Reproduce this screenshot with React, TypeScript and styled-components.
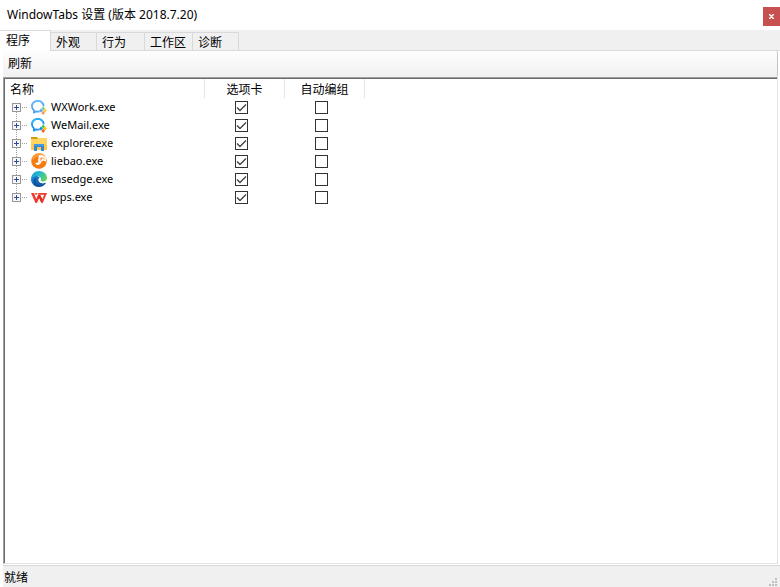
import React, { useState } from "react";
import styled, { createGlobalStyle } from "styled-components";

const GlobalStyle = createGlobalStyle`
  *, *::before, *::after { box-sizing: border-box; }
  body {
    margin: 0;
    background: #fff;
    color: #000;
    font: 12px/18px "Noto Sans", "Noto Sans CJK SC", sans-serif;
  }
  button, input { margin: 0; padding: 0; font: inherit; color: inherit; }
`;

const Window = styled.div`
  display: flex;
  flex-direction: column;
  min-height: 100vh;
`;

const TitleBar = styled.header`
  display: flex;
  justify-content: space-between;
  height: 30px;
  padding: 7px 0 4px 7px;
`;

const Title = styled.h1`
  margin: 0;
  font: 12px/16px "Noto Sans", "Noto Sans CJK SC", sans-serif;
`;

const CloseButton = styled.button`
  display: grid;
  place-items: center;
  width: 17px;
  height: 19px;
  border: 0;
  background: #c75050;
`;

const TabStrip = styled.div`
  display: flex;
  align-items: flex-end;
  height: 21px;
  background: #f0f0f0;
  box-shadow: inset 0 -1px #d9d9d9;
`;

const Tab = styled.button<{ $width: number; $active: boolean }>`
  width: ${(p) => p.$width}px;
  height: ${(p) => (p.$active ? 21 : 19)}px;
  padding: ${(p) => (p.$active ? "0 0 0 6px" : "2px 0 0 5px")};
  border: solid #d9d9d9;
  border-width: ${(p) => (p.$active ? "1px 1px 0 0" : "1px 1px 1px 0")};
  background: ${(p) => (p.$active ? "#fff" : "#f0f0f0")};
  text-align: left;
  line-height: 16px;
  white-space: nowrap;
`;

const Panel = styled.main`
  display: flex;
  flex: 1;
  flex-direction: column;
  padding: 0 2px 1px 3px;
`;

const Toolbar = styled.div`
  display: flex;
  height: 26px;
  border-right: 1px solid #c4c4c4;
  border-radius: 0 2px 2px 0;
  background: linear-gradient(#fdfdfd, #f0f0f0);
`;

const ToolButton = styled.button`
  height: 26px;
  padding: 0 5px;
  border: 0;
  background: transparent;
`;

const TreeFrame = styled.section`
  flex: 1;
  border: 1px solid;
  border-color: #a0a0a0 #e3e3e3 #e3e3e3 #a0a0a0;
  box-shadow: inset 1px 1px #696969;
  padding: 1px 0 0 1px;
`;

const TreeTable = styled.table`
  width: 360px;
  table-layout: fixed;
  border-collapse: separate;
  border-spacing: 0;
`;

const HeadCell = styled.th<{ $name?: boolean }>`
  width: ${(p) => (p.$name ? 200 : 80)}px;
  height: 19px;
  padding: ${(p) => (p.$name ? "3px 0 0 5px" : "3px 0 0")};
  border-right: 1px solid #e5e5e5;
  font-weight: 400;
  line-height: 16px;
  text-align: ${(p) => (p.$name ? "left" : "center")};
`;

const Cell = styled.td`
  height: 18px;
  padding: 0;
`;

const NameLine = styled.div`
  display: flex;
  align-items: center;
  height: 18px;
  padding-left: 7px;
  font-size: 11px;
`;

const Branch = styled.button`
  display: block;
  width: 19px;
  height: 18px;
  border: 0;
  background: transparent;

  svg { display: block; }
`;

const Program = styled.span`
  padding-left: 4px;
  line-height: 18px;
`;

const CheckHolder = styled.label`
  display: grid;
  width: 13px;
  height: 13px;
  margin-left: 30px;

  > * { grid-area: 1 / 1; }
  svg { pointer-events: none; display: none; }
  input:checked + svg { display: block; }
`;

const CheckInput = styled.input`
  appearance: none;
  width: 13px;
  height: 13px;
  border: 1px solid #333;
  background: #fff;
`;

const StatusBar = styled.footer`
  display: flex;
  justify-content: space-between;
  align-items: flex-end;
  height: 22px;
  margin-left: 3px;
  padding: 0 3px 1px 1px;
  border-top: 1px solid #d7d7d7;
  background: #f0f0f0;
`;

const StatusText = styled.span`
  line-height: 16px;
`;

const Icon = ({ children }: { children: React.ReactNode }) => (
  <svg width="16" height="16" viewBox="0 0 16 16" aria-hidden="true">{children}</svg>
);

const ChatIcon = ({ mail = false }: { mail?: boolean }) => (
  <Icon>
    <path
      d="M12.6 7.2C12.6 4 10.2 1.8 6.9 1.8S1 4.2 1 7.3c0 1.8.8 3.2 2.1 4.2L2.8 13.6l2.4-1.2c1.2.3 2.4.3 3.4 0"
      fill="none"
      stroke={mail ? "#1f95ee" : "#55a3f2"}
      strokeWidth="1.8"
      strokeLinejoin="round"
    />
    <path d="M1 7.3C1 4.2 3.5 1.8 6.9 1.8c2 0 3.7.8 4.7 2.2" fill="none" stroke={mail ? "#29b4f4" : "#6fb9f8"} strokeWidth="1.8" />
    <path d="M12.2 7.2l1.7 2.2-1.6 2.2-1.8-2.2z" fill={mail ? "#45c83f" : "#79cf82"} />
    <path d="M14.1 9.6l1.9 2-2 1.9-2-1.8z" fill={mail ? "#ffc400" : "#ffca45"} />
    <path d="M12.2 11.8l1.8 2-1.8 2.2-1.9-2z" fill={mail ? "#fa6428" : "#f89663"} />
    <path d="M10 9.6l1.9 2-1.9 2-1.9-1.8z" fill={mail ? "#1689e8" : "#55abf1"} />
  </Icon>
);

const FolderIcon = () => (
  <Icon>
    <path d="M0 2h6l1.5 2H0z" fill="#d79a12" />
    <path d="M0 4h7l1-1h8v12H0z" fill="#ffd461" />
    <path d="M0 9h16v6H0z" fill="#fbc94e" />
    <path d="M3 10q0-1 1-1h8q1 0 1 1v6h-3v-4H6v4H3z" fill="#3585d3" />
    <path d="M3 10q0-1 1-1h8q1 0 1 1v1H3z" fill="#459be2" />
  </Icon>
);

const LeopardIcon = () => (
  <Icon>
    <circle cx="8" cy="8" r="7.8" fill="#f67a12" />
    <path d="M1 5C3.5.7 10-.5 13.6 2.5 9 1.8 5 3.2 2.2 7z" fill="#ff9a3c" />
    <path d="M7.5 2.8C10 1 13.8 2 15.3 5.5l-.4 3.2-2.4-1.2-1.8.8c-.5 2-1.8 3.3-3.6 3.6-1.6 0-2.6-.8-2.8-2.2l1.5.3 1.8-1.1-.6-1.2C6.900 6.500 8 4.600 7.500 2.800z" fill="#fff" />
    <path d="M9.500 4.200l2.700.3 2.600 2.200-3.400-.8-2.300 2.400-.3-1.700z" fill="#ffb36e" />
  </Icon>
);

const EdgeIcon = () => (
  <Icon>
    <defs>
      <linearGradient id="edge-wave" x1="0" y1="0" x2="1" y2="0.5">
        <stop offset="0" stopColor="#1a92dc" />
        <stop offset="0.55" stopColor="#27bcc8" />
        <stop offset="1" stopColor="#5fd45a" />
      </linearGradient>
      <linearGradient id="edge-base" x1="0" y1="0" x2="0.6" y2="1">
        <stop offset="0" stopColor="#1b8fdc" />
        <stop offset="1" stopColor="#0f529d" />
      </linearGradient>
    </defs>
    <path d="M0 8c0 4.6 3.5 8 8 8 2.9 0 5.4-1.4 6.8-3.7.4-.6-.2-1-.8-.7-3 1.3-6.4.2-6.4-2.8 0-1 .6-1.7 1.3-2.200C6.200 3.900 1 4.300 0 8z" fill="url(#edge-base)" />
    <path d="M0 8C.3 3.300 3.600 0 8 0c4.600 0 8 3.200 8 6.700 0 2.500-1.700 4-4 4-1.800 0-3-.6-2.500-1.400 1.300-2-.6-4.300-3.600-4.300C3.300 5 .8 6 0 8z" fill="url(#edge-wave)" />
    <path d="M5.800 7C3.300 10.200 5.400 15 10 15.500 6.500 16.700 2.500 13.700 2.600 10.300 2.700 8.500 3.900 7.200 5.800 7z" fill="#104f98" />
    <path d="M8.900 6.600c1.100.7 1.300 1.800.6 2.700-.5.800.7 1.400 2.500 1.400 1.400 0 2.600-.6 3.300-1.600l.1 2.200-1.400.4c-3 1.300-6.400.1-6.400-2.900 0-1 .5-1.700 1.300-2.200z" fill="#fff" />
  </Icon>
);

const WpsIcon = () => (
  <Icon>
    <path d="M0 4h3l2.200 6L7 6h2.200l2 4.200L13.200 5.800H6.800L7.500 4H16l-4.300 10h-1.200L8.300 9l-2.400 5H4.500z" fill="#f2382c" />
    <path d="M3.600 4h3.100l-.8 1.800H4.200z" fill="#ff5a48" />
    <path d="M7 6h2.200l2.100 4.500L10.400 14 8.100 8.700z" fill="#db2922" />
  </Icon>
);

const CloseGlyph = () => (
  <svg width="7" height="7" viewBox="0 0 7 7" aria-hidden="true">
    <path d="M1.500 1.500l4 4M5.500 1.500l-4 4M1 1.500h1.500M4.500 1.500H6M1 5.500h1.500M4.500 5.500H6" stroke="#fff" strokeWidth="1.200" />
  </svg>
);

const BranchGlyph = ({ first, last }: { first: boolean; last: boolean }) => (
  <svg width="19" height="18" viewBox="0 0 19 18" aria-hidden="true" shapeRendering="crispEdges">
    {!first && <path d="M4.5 0v5" stroke="#a0a0a0" strokeDasharray="1 1" />}
    {!last && <path d="M4.5 14v4" stroke="#a0a0a0" strokeDasharray="1 1" />}
    <path d="M10 9.5h6" stroke="#a0a0a0" strokeDasharray="1 1" />
    <rect x="0.5" y="5.5" width="8" height="8" fill="#f7f7f7" stroke="#969696" />
    <path d="M2 9.5h5M4.5 7v5" stroke="#2b4b9b" />
  </svg>
);

const SizeGrip = () => (
  <svg width="8" height="8" viewBox="0 0 8 8" aria-hidden="true">
    <path d="M6 0h2v2H6zM3 3h2v2H3zM6 3h2v2H6zM0 6h2v2H0zM3 6h2v2H3zM6 6h2v2H6z" fill="#bfbfbf" />
  </svg>
);

const Check = ({ label, initial }: { label: string; initial: boolean }) => (
  <CheckHolder>
    <CheckInput type="checkbox" aria-label={label} defaultChecked={initial} />
    <svg width="13" height="13" viewBox="0 0 13 13" aria-hidden="true">
      <path d="M2 6.5l3 3 6-6" fill="none" stroke="#444" strokeWidth="1.4" />
    </svg>
  </CheckHolder>
);

const tabs = [
  { name: "程序", width: 51 },
  { name: "外观", width: 46 },
  { name: "行为", width: 48 },
  { name: "工作区", width: 48 },
  { name: "诊断", width: 46 },
];

const programs = [
  { name: "WXWork.exe", icon: <ChatIcon /> },
  { name: "WeMail.exe", icon: <ChatIcon mail /> },
  { name: "explorer.exe", icon: <FolderIcon /> },
  { name: "liebao.exe", icon: <LeopardIcon /> },
  { name: "msedge.exe", icon: <EdgeIcon /> },
  { name: "wps.exe", icon: <WpsIcon /> },
];

export default function App() {
  const [active, setActive] = useState("程序");
  return (
    <Window>
      <GlobalStyle />
      <TitleBar>
        <Title>WindowTabs 设置 (版本 2018.7.20)</Title>
        <CloseButton type="button" aria-label="关闭"><CloseGlyph /></CloseButton>
      </TitleBar>
      <TabStrip role="tablist">
        {tabs.map((t) => (
          <Tab
            key={t.name}
            type="button"
            role="tab"
            aria-selected={t.name === active}
            $width={t.width}
            $active={t.name === active}
            onClick={() => setActive(t.name)}
          >
            {t.name}
          </Tab>
        ))}
      </TabStrip>
      <Panel>
        <Toolbar role="toolbar"><ToolButton type="button">刷新</ToolButton></Toolbar>
        <TreeFrame>
          <TreeTable>
            <thead>
              <tr>
                <HeadCell $name scope="col">名称</HeadCell>
                <HeadCell scope="col">选项卡</HeadCell>
                <HeadCell scope="col">自动编组</HeadCell>
              </tr>
            </thead>
            <tbody>
              {programs.map((p, i) => (
                <tr key={p.name}>
                  <Cell>
                    <NameLine>
                      <Branch type="button" aria-label={`展开 ${p.name}`}>
                        <BranchGlyph first={i === 0} last={i === programs.length - 1} />
                      </Branch>
                      {p.icon}
                      <Program>{p.name}</Program>
                    </NameLine>
                  </Cell>
                  <Cell><Check label={`${p.name} 选项卡`} initial /></Cell>
                  <Cell><Check label={`${p.name} 自动编组`} initial={false} /></Cell>
                </tr>
              ))}
            </tbody>
          </TreeTable>
        </TreeFrame>
      </Panel>
      <StatusBar><StatusText>就绪</StatusText><SizeGrip /></StatusBar>
    </Window>
  );
}
